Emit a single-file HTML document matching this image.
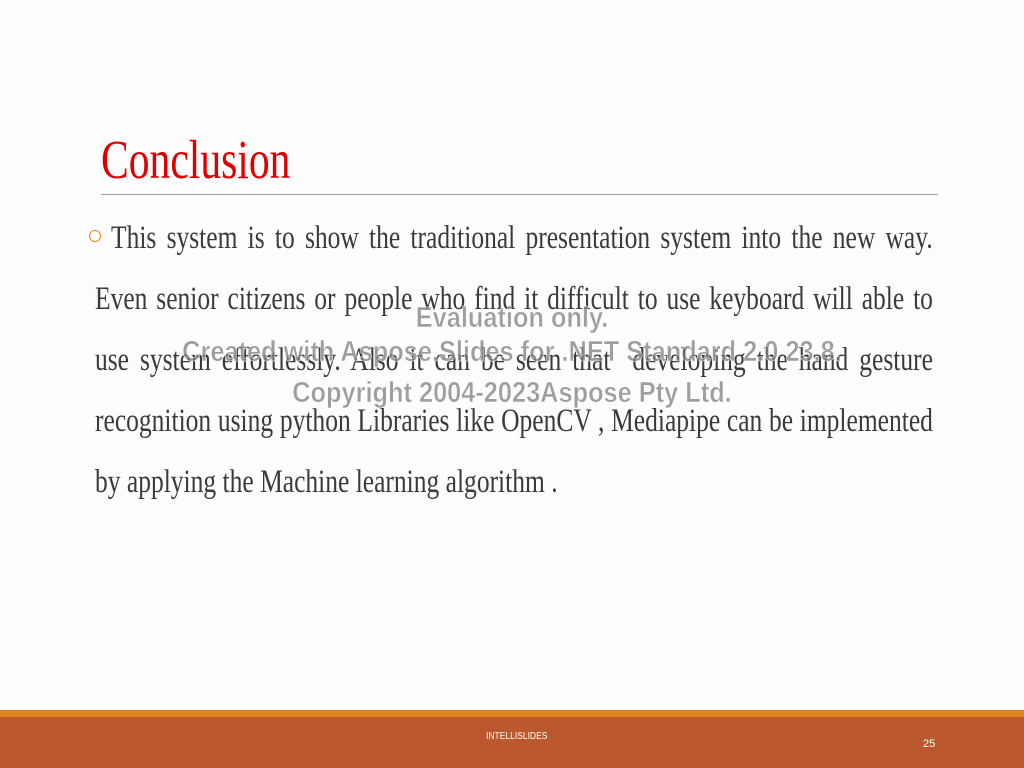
<!DOCTYPE html>
<html><head><style>
body{margin:0;width:1024px;height:768px;position:relative;background:#fefdfd;overflow:hidden;font-family:"Liberation Serif",serif}
.t{position:absolute;left:101px;top:127px;font-size:55px;color:#e00000;transform:scaleX(0.756);transform-origin:left top;white-space:nowrap;line-height:66px}
.hr{position:absolute;left:101px;top:194px;width:837px;height:1px;background:#a0a0a0}
.l{position:absolute;font-size:33px;color:#3a3a3a;white-space:nowrap;transform:scaleX(0.773);transform-origin:left top;line-height:40px}
.j{text-align:justify;text-align-last:justify}
.wm{position:absolute;left:0;width:1024px;text-align:center;font-family:"Liberation Sans",sans-serif;font-weight:bold;font-size:29px;line-height:34px;color:rgba(125,125,125,0.75);-webkit-text-stroke:0.5px #fff;transform:scaleX(0.874);transform-origin:512px 0}
.b{position:absolute;left:89px;top:230px;width:10px;height:10px;border:1.5px solid #d98a1c;border-radius:50%}
</style></head><body>
<div class="t">Conclusion</div>
<div class="hr"></div>
<div class="b"></div>
<div class="l j" style="left:111px;top:218px;width:1063px">This system is to show the traditional presentation system into the new way.</div>
<div class="l j" style="left:95px;top:279px;width:1084px">Even senior citizens or people who find it difficult to use keyboard will able to</div>
<div class="l j" style="left:95px;top:340px;width:1084px">use system effortlessly. Also it can be seen that &nbsp;developing the hand gesture</div>
<div class="l j" style="left:95px;top:401px;width:1084px">recognition using python Libraries like OpenCV , Mediapipe can be implemented</div>
<div class="l" style="left:95px;top:462px">by applying the Machine learning algorithm .</div>
<div class="wm" style="top:301px">Evaluation only.</div>
<div class="wm" style="top:335px">Created with Aspose.Slides for .NET Standard 2.0 23.8.</div>
<div class="wm" style="top:376px">Copyright 2004-2023Aspose Pty Ltd.</div>
<div style="position:absolute;left:0;top:710px;width:1024px;height:7px;background:#e0821e"></div>
<div style="position:absolute;left:0;top:717px;width:1024px;height:51px;background:#bb582d"></div>
<div style="position:absolute;left:486px;top:731px;font-family:'Liberation Sans',sans-serif;font-size:10px;color:#fff;transform:scaleX(0.85);transform-origin:left top">INTELLISLIDES</div>
<div style="position:absolute;left:923px;top:738px;font-family:'Liberation Sans',sans-serif;font-size:11px;color:#fff">25</div>
</body></html>
